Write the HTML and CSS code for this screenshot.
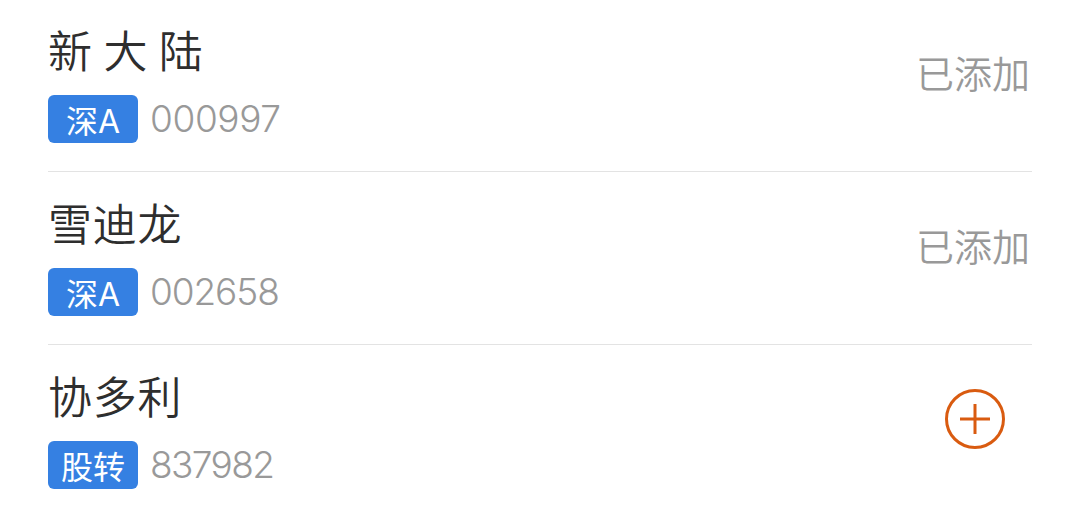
FILE: index.html
```html
<!DOCTYPE html>
<html lang="zh-CN">

<head>
    <title>股票搜索</title>
    <meta charset="UTF-8">
    <link rel="stylesheet" href="styles.css">
</head>

<body>
    <ul class="stock-list">
        <li class="stock">
            <div class="stock-info">
                <h3 class="stock-name">新 大 陆</h3>
                <div class="stock-meta">
                    <span class="market">深A</span>
                    <span class="code code-wide">000997</span>
                </div>
            </div>
            <span class="added">已添加</span>
        </li>
        <li class="stock">
            <div class="stock-info">
                <h3 class="stock-name">雪迪龙</h3>
                <div class="stock-meta">
                    <span class="market">深A</span>
                    <span class="code">002658</span>
                </div>
            </div>
            <span class="added">已添加</span>
        </li>
        <li class="stock">
            <div class="stock-info">
                <h3 class="stock-name">协多利</h3>
                <div class="stock-meta">
                    <span class="market">股转</span>
                    <span class="code code-narrow">837982</span>
                </div>
            </div>
            <button class="add-button" aria-label="添加">
                <svg width="60" height="60" viewBox="0 0 60 60">
                    <circle cx="30" cy="30" r="28.5" />
                    <path d="M15 30h30M30 15v30" />
                </svg>
            </button>
        </li>
    </ul>
</body>

</html>
```

FILE: styles.css
```css
body {
    background: #fff;
    font-family: Inter, "Noto Sans CJK SC", sans-serif;
    margin: 0;
}

.stock-list {
    list-style-type: none;
    margin: 0;
    padding: 0 47px 0 48px;
}

.stock {
    display: flex;
    justify-content: space-between;
    height: 172px;
    border-bottom: 1px solid #e3e3e3;
    box-sizing: border-box;
}

.stock + .stock {
    height: 173px;
}

.stock:last-child {
    border-bottom: none;
}

.stock-info {
    padding-top: 19px;
}

.stock + .stock .stock-info {
    padding-top: 20px;
}

.stock-name {
    color: #2e2e2e;
    font-family: "Noto Sans CJK SC", sans-serif;
    font-size: 44px;
    font-weight: 350;
    line-height: 60px;
    height: 76px;
    margin: 0;
    letter-spacing: 0.8px;
}

.stock-meta {
    display: flex;
    align-items: center;
    gap: 12px;
}

.market {
    width: 90px;
    height: 48px;
    line-height: 53px;
    text-align: center;
    color: #fff;
    background-color: #3580e2;
    border-radius: 6px;
    font-size: 32px;
}

.code {
    color: #999;
    font-size: 37px;
    font-weight: 350;
    line-height: 48px;
    letter-spacing: -1.1px;
}

.code-wide {
    letter-spacing: -0.4px;
}

.code-narrow {
    letter-spacing: -1.6px;
}

.added {
    color: #999;
    font-size: 38px;
    font-weight: 350;
    line-height: 56px;
    padding: 46px 2px 0 0;
}

.stock + .stock .added {
    padding-top: 47px;
}

.add-button {
    width: 60px;
    height: 60px;
    margin: 44px 27px 0 0;
    padding: 0;
    border: none;
    background: none;
    cursor: pointer;
}

.add-button svg {
    display: block;
    fill: none;
    stroke: #d95b10;
    stroke-width: 3;
}
```
